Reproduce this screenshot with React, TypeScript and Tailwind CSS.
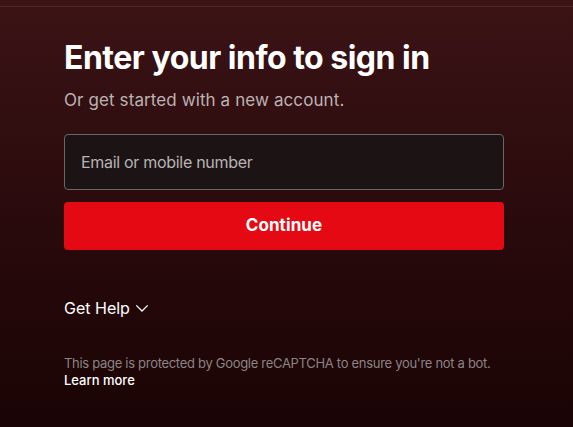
import React from 'react';

const SignIn: React.FC = () => {
  return (
    <div className="min-h-[427px] w-full bg-gradient-to-b from-[#3b1315] to-[#1a0405] font-['Inter',sans-serif] text-white">
      <div className="pt-[6px]">
        <div className="h-px bg-[#55303a]/70" />
      </div>
      <div className="w-[440px] ml-16 pt-[31px]">
        <h1 className="text-[32px] font-bold leading-[40px] tracking-[-0.5px]">Enter your info to sign in</h1>
        <p className="mt-[10px] text-[17px] text-[#bcb3b3] leading-6 tracking-[0.1px]">Or get started with a new account.</p>

        <div className="mt-[22px] h-[56px] rounded border border-[#6c6666] bg-[#1c1414] flex items-center px-4">
          <span className="text-base text-[#b8b3b3] tracking-[-0.3px]">Email or mobile number</span>
        </div>

        <button className="mt-[12px] h-[48px] w-full rounded bg-[#e50914] text-[17px] font-bold tracking-[0.1px]">Continue</button>

        <div className="mt-[46px] flex items-center gap-[5px] text-base">
          <span>Get Help</span>
          <svg width="14" height="14" viewBox="0 0 16 16" fill="none">
            <path d="M1.5 5l6.5 6.5 6.5-6.5" stroke="white" strokeWidth="1.5" />
          </svg>
        </div>

        <p className="mt-[35px] text-[13px] leading-[17px] text-[#8c8484] tracking-[-0.3px] whitespace-nowrap">
          This page is protected by Google reCAPTCHA to ensure you're not a bot.
        </p>
        <p className="text-[13px] leading-[17px] text-white font-medium">Learn more</p>
      </div>
    </div>
  );
};

export default SignIn;
